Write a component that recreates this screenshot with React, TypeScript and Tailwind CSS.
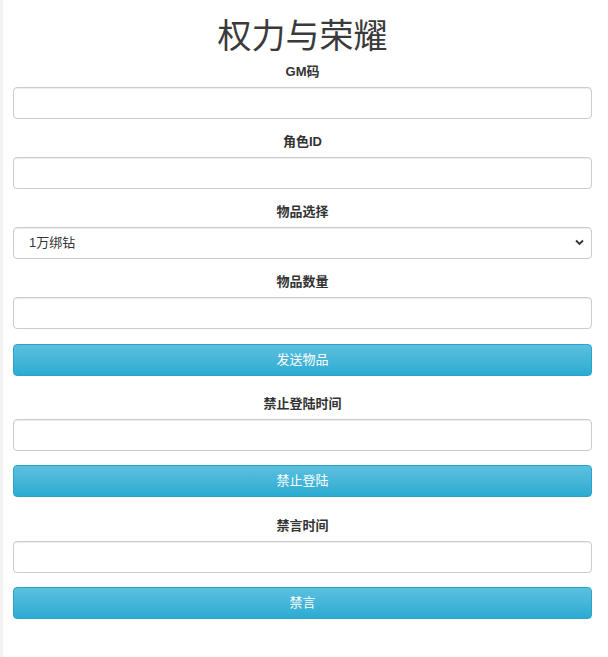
import { useState } from 'react'

const font = '"Liberation Sans", "Noto Sans CJK SC", sans-serif'

function Label({ children }: { children: string }) {
  return (
    <div className="mb-[5px] h-[20px] text-center text-[13px] font-bold leading-[20px] text-[#333]">
      {children}
    </div>
  )
}

function TextInput() {
  return (
    <input
      type="text"
      className="block h-[32px] w-full rounded-[4px] border border-[#ccc] bg-white px-3 text-[13px] text-[#555] shadow-[inset_0_1px_1px_rgba(0,0,0,0.075)] outline-none"
    />
  )
}

function InfoButton({ children }: { children: string }) {
  return (
    <button
      type="button"
      className="block h-[32px] w-full rounded-[4px] border border-[#28a4c9] bg-gradient-to-b from-[#5bc0de] to-[#2aabd2] text-[13px] leading-[30px] text-white"
    >
      {children}
    </button>
  )
}

export default function App() {
  const [item, setItem] = useState('1万绑钻')

  return (
    <div
      className="min-h-[657px] border-l-[3px] border-[#f2f2f2] bg-white pl-[10px] pr-[16px]"
      style={{ fontFamily: font }}
    >
      <h1 className="mb-[6px] pt-[16px] text-center text-[34px] font-normal leading-[40px] text-[#3a3a3a]">
        权力与荣耀
      </h1>

      <Label>GM码</Label>
      <TextInput />

      <div className="mt-[13px]">
        <Label>角色ID</Label>
        <TextInput />
      </div>

      <div className="mt-[13px]">
        <Label>物品选择</Label>
        <div className="relative">
          <select
            value={item}
            onChange={(e) => setItem(e.target.value)}
            className="block h-[32px] w-full appearance-none rounded-[4px] border border-[#ccc] bg-white pl-[15px] text-[13px] text-[#333] shadow-[inset_0_1px_1px_rgba(0,0,0,0.075)] outline-none"
          >
            <option>1万绑钻</option>
            <option>10万绑钻</option>
            <option>100万绑钻</option>
          </select>
          <svg
            className="pointer-events-none absolute right-[8px] top-[12px]"
            width="9"
            height="7"
            viewBox="0 0 9 7"
            fill="none"
            stroke="#333"
            strokeWidth="1.8"
          >
            <path d="M1 1.5l3.5 3.5L8 1.5" />
          </svg>
        </div>
      </div>

      <div className="mt-[13px]">
        <Label>物品数量</Label>
        <TextInput />
      </div>

      <div className="mt-[15px]">
        <InfoButton>发送物品</InfoButton>
      </div>

      <div className="mt-[18px]">
        <Label>禁止登陆时间</Label>
        <TextInput />
      </div>

      <div className="mt-[14px]">
        <InfoButton>禁止登陆</InfoButton>
      </div>

      <div className="mt-[19px]">
        <Label>禁言时间</Label>
        <TextInput />
      </div>

      <div className="mt-[14px]">
        <InfoButton>禁言</InfoButton>
      </div>
    </div>
  )
}
